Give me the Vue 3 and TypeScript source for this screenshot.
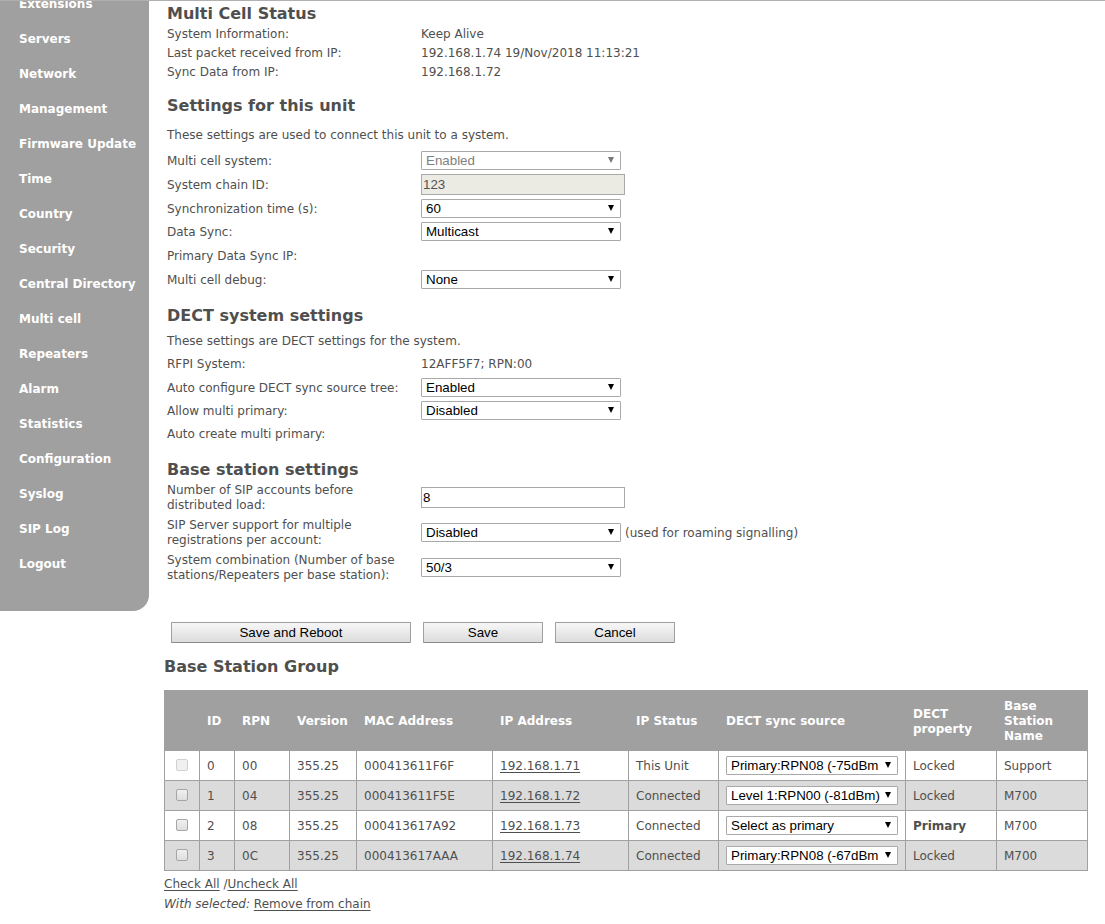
<script setup lang="ts">
import { ref } from 'vue'

interface SettingRow {
  id: string
  label: string
  kind: 'select' | 'input' | 'text'
  value: string
  disabled?: boolean
  note?: string
  compact?: boolean
}

interface BaseStation {
  id: number
  rpn: string
  version: string
  mac: string
  ip: string
  status: string
  source: string
  property: string
  name: string
  locked: boolean
  checked: boolean
}

const navItems: string[] = [
  'Extensions', 'Servers', 'Network', 'Management', 'Firmware Update', 'Time',
  'Country', 'Security', 'Central Directory', 'Multi cell', 'Repeaters', 'Alarm',
  'Statistics', 'Configuration', 'Syslog', 'SIP Log', 'Logout',
]

const status = [
  { label: 'System Information:', value: 'Keep Alive' },
  { label: 'Last packet received from IP:', value: '192.168.1.74 19/Nov/2018 11:13:21' },
  { label: 'Sync Data from IP:', value: '192.168.1.72' },
]

const unitRows = ref<SettingRow[]>([
  { id: 'multi-cell', label: 'Multi cell system:', kind: 'select', value: 'Enabled', disabled: true },
  { id: 'chain-id', label: 'System chain ID:', kind: 'input', value: '123', disabled: true },
  { id: 'sync-time', label: 'Synchronization time (s):', kind: 'select', value: '60' },
  { id: 'data-sync', label: 'Data Sync:', kind: 'select', value: 'Multicast' },
  { id: 'primary-ip', label: 'Primary Data Sync IP:', kind: 'text', value: '' },
  { id: 'debug', label: 'Multi cell debug:', kind: 'select', value: 'None' },
])

const dectRows = ref<SettingRow[]>([
  { id: 'rfpi', label: 'RFPI System:', kind: 'text', value: '12AFF5F7; RPN:00' },
  { id: 'sync-tree', label: 'Auto configure DECT sync source tree:', kind: 'select', value: 'Enabled' },
  { id: 'allow-multi', label: 'Allow multi primary:', kind: 'select', value: 'Disabled' },
  { id: 'auto-multi', label: 'Auto create multi primary:', kind: 'text', value: '', compact: true },
])

const baseRows = ref<SettingRow[]>([
  { id: 'sip-accounts', label: 'Number of SIP accounts before distributed load:', kind: 'input', value: '8' },
  { id: 'sip-multi', label: 'SIP Server support for multiple registrations per account:', kind: 'select', value: 'Disabled', note: '(used for roaming signalling)' },
  { id: 'combination', label: 'System combination (Number of base stations/Repeaters per base station):', kind: 'select', value: '50/3' },
])

const sections = [
  { title: 'Settings for this unit', intro: 'These settings are used to connect this unit to a system.', rows: unitRows, className: 'unit' },
  { title: 'DECT system settings', intro: 'These settings are DECT settings for the system.', rows: dectRows, className: 'dect' },
  { title: 'Base station settings', intro: '', rows: baseRows, className: 'base' },
]

const columns = ['', 'ID', 'RPN', 'Version', 'MAC Address', 'IP Address', 'IP Status', 'DECT sync source', 'DECT property', 'Base Station Name']

const stations = ref<BaseStation[]>([
  { id: 0, rpn: '00', version: '355.25', mac: '000413611F6F', ip: '192.168.1.71', status: 'This Unit', source: 'Primary:RPN08 (-75dBm', property: 'Locked', name: 'Support', locked: true, checked: false },
  { id: 1, rpn: '04', version: '355.25', mac: '000413611F5E', ip: '192.168.1.72', status: 'Connected', source: 'Level 1:RPN00 (-81dBm)', property: 'Locked', name: 'M700', locked: false, checked: false },
  { id: 2, rpn: '08', version: '355.25', mac: '000413617A92', ip: '192.168.1.73', status: 'Connected', source: 'Select as primary', property: 'Primary', name: 'M700', locked: false, checked: false },
  { id: 3, rpn: '0C', version: '355.25', mac: '000413617AAA', ip: '192.168.1.74', status: 'Connected', source: 'Primary:RPN08 (-67dBm', property: 'Locked', name: 'M700', locked: false, checked: false },
])

function setAll(checked: boolean): void {
  stations.value.forEach((s) => {
    if (!s.locked) s.checked = checked
  })
}
</script>

<template>
  <div class="page">
    <nav class="sidebar">
      <ul>
        <li v-for="item in navItems" :key="item"><a href="#">{{ item }}</a></li>
      </ul>
    </nav>

    <main class="content">
      <form class="settings" @submit.prevent>
        <h2>Multi Cell Status</h2>
        <dl class="status">
          <div v-for="s in status" :key="s.label">
            <dt>{{ s.label }}</dt>
            <dd>{{ s.value }}</dd>
          </div>
        </dl>

        <section v-for="section in sections" :key="section.title" :class="section.className">
          <h2>{{ section.title }}</h2>
          <p v-if="section.intro">{{ section.intro }}</p>
          <div v-for="row in section.rows.value" :key="row.id" class="row" :class="[row.kind, { compact: row.compact }]">
            <span v-if="row.kind === 'text'" class="label">{{ row.label }}</span>
            <label v-else class="label" :for="row.id">{{ row.label }}</label>
            <span v-if="row.kind === 'select'" class="picker" :class="{ off: row.disabled }">
              <select :id="row.id" v-model="row.value" :disabled="row.disabled">
                <option>{{ row.value }}</option>
              </select>
            </span>
            <input v-else-if="row.kind === 'input'" :id="row.id" v-model="row.value" type="text" :disabled="row.disabled">
            <span v-else class="value">{{ row.value }}</span>
            <span v-if="row.note" class="note">{{ row.note }}</span>
          </div>
        </section>

        <div class="actions">
          <button type="submit" class="wide">Save and Reboot</button>
          <button type="submit">Save</button>
          <button type="reset">Cancel</button>
        </div>
      </form>

      <h2 class="group-title">Base Station Group</h2>
      <table>
        <colgroup>
          <col class="c-check"><col class="c-id"><col class="c-rpn"><col class="c-version"><col class="c-mac">
          <col class="c-ip"><col class="c-status"><col class="c-source"><col class="c-property"><col>
        </colgroup>
        <thead>
          <tr><th v-for="c in columns" :key="c" scope="col">{{ c }}</th></tr>
        </thead>
        <tbody>
          <tr v-for="s in stations" :key="s.id">
            <td class="check">
              <input v-model="s.checked" type="checkbox" :disabled="s.locked" :aria-label="`Select ${s.ip}`">
            </td>
            <td>{{ s.id }}</td>
            <td>{{ s.rpn }}</td>
            <td>{{ s.version }}</td>
            <td>{{ s.mac }}</td>
            <td><a href="#">{{ s.ip }}</a></td>
            <td>{{ s.status }}</td>
            <td class="source">
              <span class="picker">
                <select v-model="s.source" :aria-label="`DECT sync source for ${s.ip}`">
                  <option>{{ s.source }}</option>
                </select>
              </span>
            </td>
            <td><strong v-if="s.property === 'Primary'">{{ s.property }}</strong><template v-else>{{ s.property }}</template></td>
            <td>{{ s.name }}</td>
          </tr>
        </tbody>
      </table>
      <p class="links"><a href="#" @click.prevent="setAll(true)">Check All</a> /<a href="#" @click.prevent="setAll(false)">Uncheck All</a></p>
      <p class="links"><em>With selected:</em> <a href="#">Remove from chain</a></p>
    </main>
  </div>
</template>

<style>
body {
  margin: 0;
  background: #fff;
}
</style>

<style scoped>
.page {
  display: flex;
  align-items: flex-start;
  border-top: 1px solid #b0b0b0;
  color: #4f4f4f;
  font: 12px/15px Verdana, "DejaVu Sans", sans-serif;
}

.sidebar {
  flex: 0 0 149px;
  overflow: hidden;
  background: #a0a0a0;
  border-bottom-right-radius: 16px;
}

.sidebar ul {
  margin: -14px 0 0;
  padding: 0 0 29px 19px;
  list-style: none;
}

.sidebar a {
  display: block;
  color: #fff;
  font-weight: bold;
  line-height: 35px;
  text-decoration: none;
  white-space: nowrap;
}

.content {
  flex: 1;
  min-width: 0;
  padding: 3px 17px 10px 15px;
}

.settings {
  padding-left: 3px;
}

h2 {
  margin: 0;
  font-size: 16px;
  line-height: 20px;
}

dl,
dd,
p {
  margin: 0;
}

.status {
  padding-top: 1px;
}

.status div {
  display: flex;
  line-height: 19px;
}

dt,
.label {
  flex: 0 0 240px;
  margin-right: 14px;
}

section {
  padding-top: 14px;
}

.dect,
.base {
  padding-top: 15px;
}

.unit p {
  padding: 12px 0 6px;
}

.dect p {
  padding: 8px 0 2px;
}

.row {
  display: flex;
  align-items: center;
  min-height: 23px;
}

.row.text,
.row.input {
  min-height: 25px;
}

.row.compact {
  min-height: 23px;
}

.unit .label,
.dect .label,
.value,
.note {
  padding-top: 2px;
}

.base .row {
  min-height: 35px;
}

.note {
  margin-left: 4px;
}

select,
input[type="text"],
button {
  box-sizing: border-box;
  margin: 0;
  border: 1px solid #a9a9a9;
  color: #000;
  font-family: "Liberation Sans", Arial, sans-serif;
}

.picker {
  position: relative;
  display: block;
  width: 200px;
}

.picker::after {
  position: absolute;
  top: 6px;
  right: 7px;
  width: 6px;
  height: 6px;
  background: #000;
  clip-path: polygon(0 0, 100% 0, 50% 100%);
  content: "";
  pointer-events: none;
}

.picker.off::after {
  background: #777;
}

select {
  display: block;
  width: 100%;
  height: 19px;
  padding: 0 15px 0 4px;
  border-radius: 1px;
  background: #fff;
  appearance: none;
}

select:disabled {
  color: #808080;
  opacity: 1;
}

input[type="text"] {
  width: 204px;
  height: 21px;
  padding: 1px;
  border-radius: 0;
  background: #fff;
}

input[type="text"]:disabled {
  background: #ebebe4;
  color: #545454;
}

.actions {
  display: flex;
  gap: 12px;
  padding: 37px 0 0 4px;
}

button {
  width: 120px;
  height: 21px;
  padding: 0;
  border-color: #a0a0a0 #a0a0a0 #8c8c8c;
  border-radius: 1px;
  background: linear-gradient(#f7f7f7, #dcdcdc);
}

button.wide {
  width: 240px;
}

.group-title {
  margin: 14px 0 13px;
}

table {
  width: 100%;
  border-collapse: collapse;
  table-layout: fixed;
}

.c-check,
.c-id {
  width: 35px;
}

.c-rpn {
  width: 55px;
}

.c-version {
  width: 67px;
}

.c-mac,
.c-ip {
  width: 136px;
}

.c-status {
  width: 90px;
}

.c-source {
  width: 187px;
}

.c-property {
  width: 91px;
}

th,
td {
  box-sizing: border-box;
  padding: 2px 7px 0;
  border: 1px solid #a0a0a0;
  text-align: left;
  vertical-align: middle;
}

th {
  height: 60px;
  background: #a0a0a0;
  color: #fff;
}

td {
  height: 30px;
}

td.source {
  padding-top: 0;
}

td.check {
  padding: 0 7px 2px;
}

tbody tr:nth-child(even) {
  background: #dbdbdb;
}

td .picker {
  width: 100%;
}

input[type="checkbox"] {
  display: block;
  box-sizing: border-box;
  width: 12px;
  height: 12px;
  margin: 0 auto;
  border: 1px solid #a6a6a6;
  border-radius: 2px;
  background: linear-gradient(#f0f0f0, #dedede);
  appearance: none;
}

input[type="checkbox"]:checked {
  background: #555;
}

input[type="checkbox"]:disabled {
  border-color: #d0d0d0;
  background: #f0f0f0;
}

td a,
.links a {
  color: inherit;
  text-underline-offset: 2px;
}

.links {
  line-height: 20px;
}

table + .links {
  padding-top: 3px;
}
</style>
